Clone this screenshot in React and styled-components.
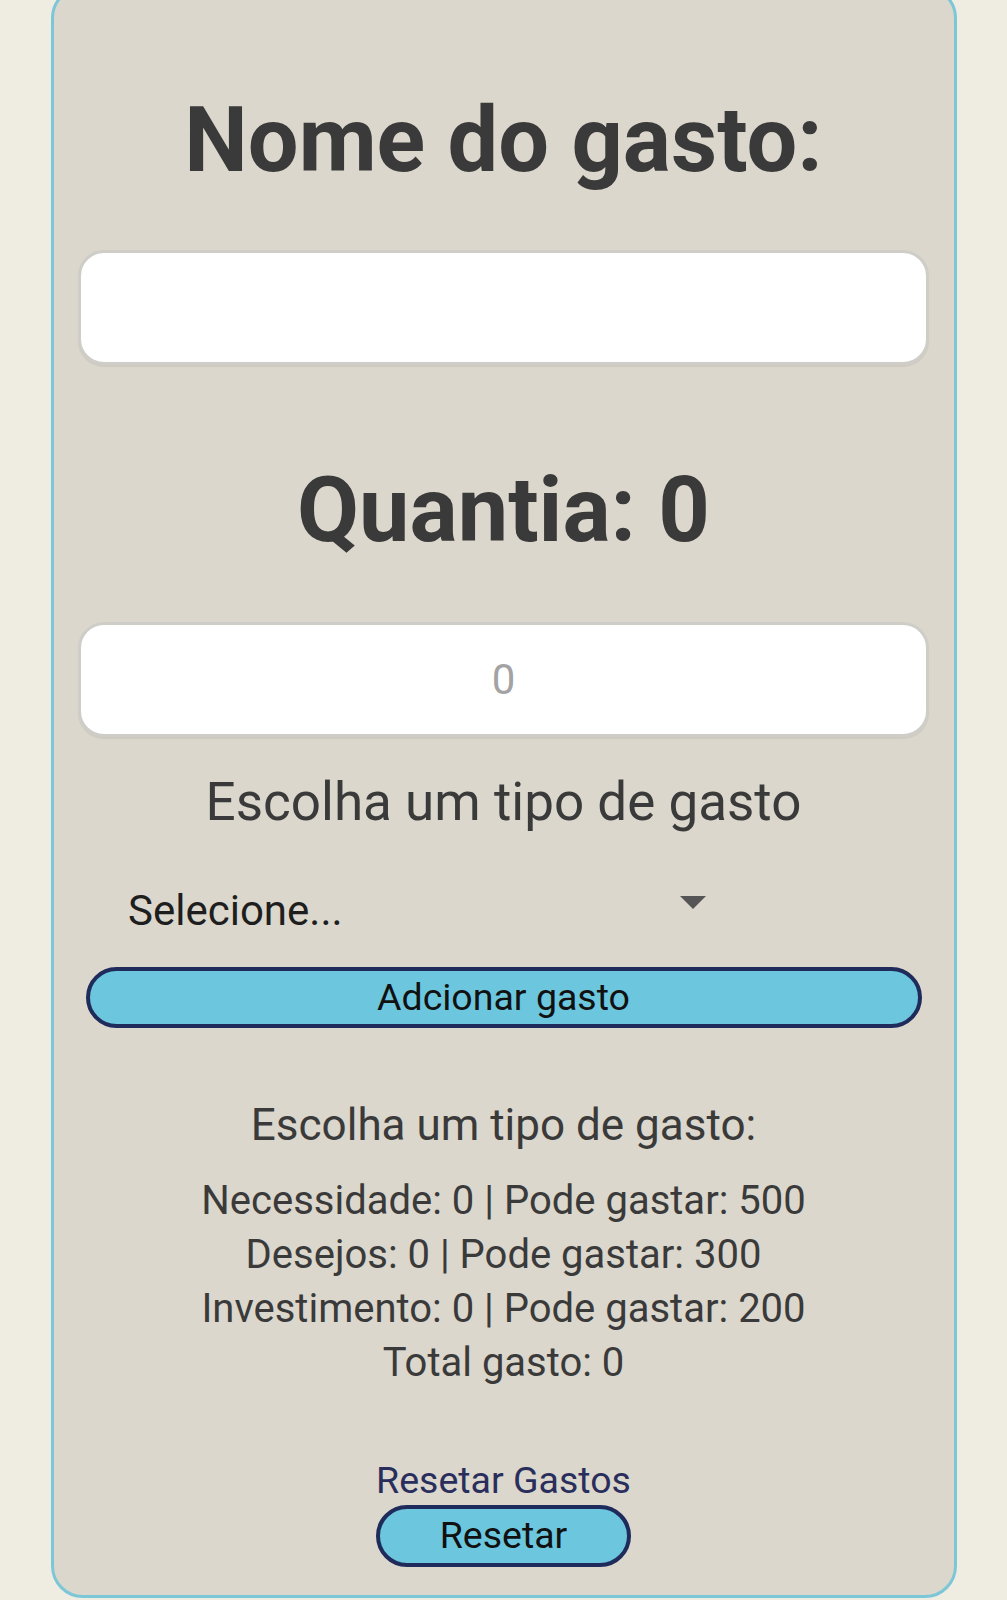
import React, { useState } from "react"
import styled, { createGlobalStyle } from "styled-components"

const colors = {
  page: "#efece1",
  card: "#dbd7cc",
  cardBorder: "#7cc7d7",
  text: "#3a3a3a",
  navy: "#1e2b5b",
  button: "#6cc7de",
}

const GlobalStyle = createGlobalStyle`
  html, body {
    margin: 0;
    background: ${colors.page};
    font-family: Roboto, "Noto Sans", "Liberation Sans", sans-serif;
  }
  * {
    box-sizing: border-box;
  }
`

const Page = styled.div`
  width: 1007px;
  height: 1600px;
  overflow: hidden;
`

const Card = styled.div`
  width: 906px;
  margin: -14px 0 0 51px;
  padding: 107px 25px 28px 24px;
  background: ${colors.card};
  border: 3px solid ${colors.cardBorder};
  border-radius: 32px;
  display: flex;
  flex-direction: column;
  align-items: center;
`

const Title = styled.h1`
  margin: ${(props) => props.$mt || 0}px 0 0 0;
  font-size: 90px;
  line-height: 90px;
  font-weight: 700;
  color: ${colors.text};
  text-align: center;
`

const TextInput = styled.input`
  width: 100%;
  height: 115px;
  margin-top: ${(props) => props.$mt || 0}px;
  background: #ffffff;
  border: 3px solid #cfcdc8;
  border-radius: 26px;
  box-shadow: 0 2px 1px rgba(0, 0, 0, 0.06);
  font-family: inherit;
  font-size: 42px;
  color: ${colors.text};
  text-align: center;
  outline: none;
  -moz-appearance: textfield;
  &::placeholder {
    color: #a3a3a3;
  }
  &::-webkit-inner-spin-button,
  &::-webkit-outer-spin-button {
    -webkit-appearance: none;
    margin: 0;
  }
`

const Label = styled.p`
  margin: ${(props) => props.$mt || 0}px 0 0 0;
  font-size: ${(props) => props.$size}px;
  line-height: ${(props) => props.$size}px;
  color: ${(props) => props.$color || colors.text};
  text-align: center;
`

const SelectRow = styled.div`
  align-self: flex-start;
  display: flex;
  align-items: flex-start;
  margin: 61px 0 0 50px;
`

const Select = styled.select`
  appearance: none;
  -webkit-appearance: none;
  width: 552px;
  margin: 0;
  padding: 0;
  border: none;
  background: transparent;
  font-family: inherit;
  font-size: 42px;
  line-height: 42px;
  height: 42px;
  color: #1e1e1e;
  outline: none;
`

const Caret = styled.span`
  width: 0;
  height: 0;
  margin-top: 6px;
  border-left: 13px solid transparent;
  border-right: 13px solid transparent;
  border-top: 13px solid #555555;
`

const PillButton = styled.button`
  width: ${(props) => props.$width}px;
  height: ${(props) => props.$height}px;
  margin-top: ${(props) => props.$mt || 0}px;
  padding: 0;
  background: ${colors.button};
  border: 4px solid ${colors.navy};
  border-radius: 32px;
  font-family: inherit;
  font-size: 37.5px;
  line-height: 37.5px;
  color: #111111;
  cursor: pointer;
`

const Summary = styled.div`
  margin-top: 27px;
  display: flex;
  flex-direction: column;
  align-items: center;
`

const SummaryLine = styled.span`
  font-size: 40px;
  line-height: 54px;
  color: ${colors.text};
`

const limits = [
  { name: "Necessidade", spent: 0, max: 500 },
  { name: "Desejos", spent: 0, max: 300 },
  { name: "Investimento", spent: 0, max: 200 },
]

function App() {
  const [name, setName] = useState("")
  const [amount, setAmount] = useState("")
  const [type, setType] = useState("")

  const total = limits.reduce((acc, item) => acc + item.spent, 0)

  return (
    <Page>
      <GlobalStyle />
      <Card>
        <Title>Nome do gasto:</Title>
        <TextInput
          $mt={64}
          value={name}
          onChange={(e) => setName(e.target.value)}
        />

        <Title $mt={101}>Quantia: {Number(amount) || 0}</Title>
        <TextInput
          $mt={66}
          type="number"
          placeholder="0"
          value={amount}
          onChange={(e) => setAmount(e.target.value)}
        />

        <Label $mt={39} $size={53}>
          Escolha um tipo de gasto
        </Label>
        <SelectRow>
          <Select value={type} onChange={(e) => setType(e.target.value)}>
            <option value="">Selecione...</option>
            <option value="necessidade">Necessidade</option>
            <option value="desejos">Desejos</option>
            <option value="investimento">Investimento</option>
          </Select>
          <Caret />
        </SelectRow>
        <PillButton $width={836} $height={61} $mt={35}>
          Adcionar gasto
        </PillButton>

        <Label $mt={75} $size={44}>
          Escolha um tipo de gasto:
        </Label>
        <Summary>
          {limits.map((item) => (
            <SummaryLine key={item.name}>
              {item.name}: {item.spent} | Pode gastar: {item.max}
            </SummaryLine>
          ))}
          <SummaryLine>Total gasto: {total}</SummaryLine>
        </Summary>

        <Label $mt={72} $size={37.5} $color="#2a2e5c">
          Resetar Gastos
        </Label>
        <PillButton $width={255} $height={62} $mt={5}>
          Resetar
        </PillButton>
      </Card>
    </Page>
  )
}

export default App
